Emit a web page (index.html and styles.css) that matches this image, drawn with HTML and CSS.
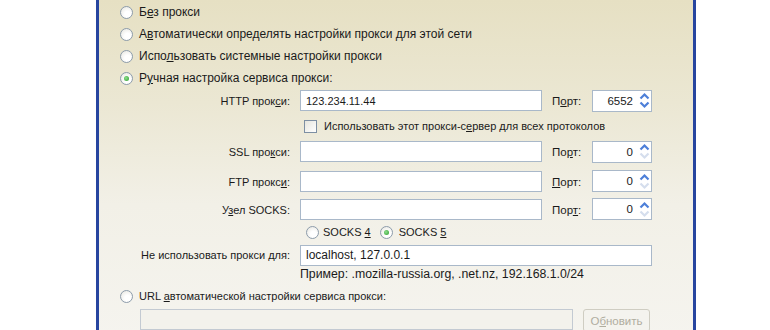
FILE: index.html
```html
<!DOCTYPE html>
<html lang="ru">
<head>
<meta charset="utf-8">
<link rel="stylesheet" href="styles.css">
</head>
<body>
<div class="window">
  <div class="opt"><span class="radio"></span><span class="txt">Б<u>е</u>з прокси</span></div>
  <div class="opt"><span class="radio"></span><span class="txt">А<u>в</u>томатически определять настройки прокси для этой сети</span></div>
  <div class="opt"><span class="radio"></span><span class="txt">Испо<u>л</u>ьзовать системные настройки прокси</span></div>
  <div class="opt"><span class="radio checked"></span><span class="txt">Р<u>у</u>чная настройка сервиса прокси:</span></div>

  <div class="manual">
    <div class="lbl r-http"><span>HTTP прок<u>с</u>и:</span></div>
    <div class="field r-http"><span class="input small">123.234.11.44</span></div>
    <div class="plbl r-http"><span>П<u>о</u>рт:</span></div>
    <div class="field r-http"><span class="spin"><span class="num">6552</span><svg class="arrows" width="11" height="19" viewBox="0 0 11 19"><path d="M1.5 7.5 L5.5 3.5 L9.5 7.5" fill="none" stroke="#4d7fd8" stroke-width="2.2"/><path d="M1.5 11.5 L5.5 15.5 L9.5 11.5" fill="none" stroke="#4d7fd8" stroke-width="2.2"/></svg></span></div>

    <div class="chk r-chk"><span class="checkbox"></span><span>Использовать этот прокси-с<u>е</u>рвер для всех протоколов</span></div>

    <div class="lbl r-ssl"><span>SSL про<u>к</u>си:</span></div>
    <div class="field r-ssl"><span class="input"></span></div>
    <div class="plbl r-ssl"><span>По<u>р</u>т:</span></div>
    <div class="field r-ssl"><span class="spin"><span class="num">0</span><svg class="arrows" width="11" height="19" viewBox="0 0 11 19"><path d="M1.5 7.5 L5.5 3.5 L9.5 7.5" fill="none" stroke="#4d7fd8" stroke-width="2.2"/><path d="M1.5 11.5 L5.5 15.5 L9.5 11.5" fill="none" stroke="#d5deed" stroke-width="2.2"/></svg></span></div>

    <div class="lbl r-ftp"><span>FTP прокс<u>и</u>:</span></div>
    <div class="field r-ftp"><span class="input"></span></div>
    <div class="plbl r-ftp"><span><u>П</u>орт:</span></div>
    <div class="field r-ftp"><span class="spin"><span class="num">0</span><svg class="arrows" width="11" height="19" viewBox="0 0 11 19"><path d="M1.5 7.5 L5.5 3.5 L9.5 7.5" fill="none" stroke="#4d7fd8" stroke-width="2.2"/><path d="M1.5 11.5 L5.5 15.5 L9.5 11.5" fill="none" stroke="#d5deed" stroke-width="2.2"/></svg></span></div>

    <div class="lbl r-socks"><span>У<u>з</u>ел SOCKS:</span></div>
    <div class="field r-socks"><span class="input"></span></div>
    <div class="plbl r-socks"><span>Пор<u>т</u>:</span></div>
    <div class="field r-socks"><span class="spin"><span class="num">0</span><svg class="arrows" width="11" height="19" viewBox="0 0 11 19"><path d="M1.5 7.5 L5.5 3.5 L9.5 7.5" fill="none" stroke="#4d7fd8" stroke-width="2.2"/><path d="M1.5 11.5 L5.5 15.5 L9.5 11.5" fill="none" stroke="#d5deed" stroke-width="2.2"/></svg></span></div>

    <div class="socksver r-ver">
      <span class="sv"><span class="radio"></span><span>SOCKS <u>4</u></span></span>
      <span class="sv"><span class="radio checked"></span><span>SOCKS <u>5</u></span></span>
    </div>

    <div class="lbl r-no"><span>Не использовать прокси <u>д</u>ля:</span></div>
    <div class="field wide r-no"><span class="input">localhost, 127.0.0.1</span></div>

    <div class="example r-ex">Пример: .mozilla-russia.org, .net.nz, 192.168.1.0/24</div>
  </div>

  <div class="opt url"><span class="radio"></span><span class="txt">URL <u>а</u>втоматической настройки сервиса прокси:</span></div>
  <div class="urlrow">
    <span class="input disabled"></span>
    <span class="button">О<u>б</u>новить</span>
  </div>
</div>
</body>
</html>
```

FILE: styles.css
```css
html, body {
  margin: 0;
  padding: 0;
  background: #ffffff;
  height: 330px;
  overflow: hidden;
}

body {
  font-family: "Liberation Sans", Arial, sans-serif;
  font-size: 12px;
  color: #1a1a1a;
}

u {
  text-decoration: underline;
  text-underline-offset: 1px;
}

.window {
  margin-left: 96px;
  width: 573px;
  height: 340px;
  border-left: 3px solid #27459f;
  border-right: 3px solid #27459f;
  background: linear-gradient(180deg, #e6e0c3 0%, #ebe7d3 30%, #f2f0e7 60%, #f5f4ef 100%);
  padding: 1px 0 0 21px;
  box-sizing: content-box;
}

.opt {
  height: 22px;
  display: flex;
  align-items: center;
}

.opt .txt {
  margin-left: 6px;
}

.radio {
  width: 11px;
  height: 11px;
  border: 1px solid #8d9cab;
  border-radius: 50%;
  background: radial-gradient(circle at 60% 65%, #ffffff 30%, #e4e3dc 100%);
  display: inline-flex;
  align-items: center;
  justify-content: center;
  flex: none;
}

.radio.checked::after {
  content: "";
  width: 5px;
  height: 5px;
  border-radius: 50%;
  background: radial-gradient(circle at 40% 40%, #8ee08e, #2a9a2a);
}

.manual {
  display: grid;
  grid-template-columns: 170px 242px 30px 60px;
  grid-template-rows: 23px 28px 23px 29px 28px 24px 22px 16px;
  column-gap: 10px;
  align-items: center;
  font-size: 11px;
}

.lbl {
  grid-column: 1;
  display: flex;
  align-items: center;
  justify-content: flex-end;
  height: 21px;
}

.plbl {
  grid-column: 3;
  display: flex;
  align-items: center;
  height: 21px;
  font-size: 11.5px;
}

.field {
  display: flex;
  align-items: center;
}

.field.wide {
  grid-column: 2 / 5;
}

.input {
  box-sizing: border-box;
  width: 100%;
  height: 21px;
  border: 1px solid #a9b8c9;
  background: #ffffff;
  display: flex;
  align-items: center;
  padding-left: 5px;
  font-size: 12px;
}

.input.small {
  font-size: 11px;
}

.spin {
  box-sizing: border-box;
  width: 60px;
  height: 22px;
  border: 1px solid #a9b8c9;
  background: #ffffff;
  display: flex;
  align-items: center;
  justify-content: flex-end;
  font-size: 11.5px;
}

.spin .num {
  padding-right: 6px;
}

.arrows {
  margin-right: 1px;
}

.r-http { grid-row: 1; }
.r-chk { grid-row: 2; }
.r-ssl { grid-row: 3; }
.r-ftp { grid-row: 4; align-self: end; }
.r-socks { grid-row: 5; align-self: end; }
.r-ver { grid-row: 6; }
.r-no { grid-row: 7; }
.r-ex { grid-row: 8; }

.chk {
  grid-column: 2 / 5;
  display: flex;
  align-items: center;
  padding-left: 4px;
  height: 28px;
}

.checkbox {
  width: 11px;
  height: 11px;
  border: 1px solid #7d8fa3;
  background: linear-gradient(135deg, #e6e5dd, #ffffff);
  margin-right: 7px;
  flex: none;
}

.socksver {
  grid-column: 2 / 5;
  display: flex;
  align-items: center;
  padding-left: 6px;
}

.sv {
  display: inline-flex;
  align-items: center;
}

.sv .radio {
  margin-right: 4px;
}

.sv + .sv {
  margin-left: 9px;
}

.sv + .sv .radio {
  margin-right: 6px;
}

.example {
  grid-column: 2 / 5;
  font-size: 12.3px;
}

.opt.url {
  margin-top: 3px;
  font-size: 11px;
}

.urlrow {
  display: flex;
  padding-left: 20px;
  margin-top: 2px;
  gap: 10px;
}

.input.disabled {
  width: 433px;
  background: #f3f2ec;
  border-color: #c3cad2;
}

.button {
  box-sizing: border-box;
  width: 67px;
  height: 23px;
  border: 1px solid #cfcdc2;
  border-radius: 3px;
  background: #f4f3ee;
  color: #b0ad9f;
  display: flex;
  align-items: center;
  justify-content: center;
  font-size: 11.5px;
}
```
